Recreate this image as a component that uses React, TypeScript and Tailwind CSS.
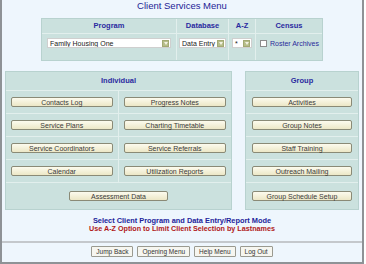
import type { ReactNode } from "react";

const font = { fontFamily: '"Liberation Sans", Arial, sans-serif' };

function Btn({ children, className = "" }: { children: ReactNode; className?: string }) {
  return (
    <div
      className={`h-[10px] flex items-center justify-center rounded-[2px] border border-[#8a8a76] bg-gradient-to-b from-[#fcfbee] to-[#ece7c6] text-[7px] leading-none text-[#3a3a3a] ${className}`}
    >
      {children}
    </div>
  );
}

function Select({ label, className = "" }: { label: string; className?: string }) {
  return (
    <div className={`h-[10px] flex items-center bg-white border border-[#cfcfcf] ${className}`}>
      <span className="flex-1 pl-[2px] text-[7px] leading-none text-[#222] whitespace-nowrap overflow-hidden">{label}</span>
      <span className="w-[7px] h-[7px] mr-[1px] flex items-center justify-center bg-[#b6bd8a] border border-[#a3aa74]">
        <svg width="4" height="3" viewBox="0 0 4 3">
          <path d="M0 0 L4 0 L2 3 Z" fill="#f2f2e2" />
        </svg>
      </span>
    </div>
  );
}

const individual = [
  ["Contacts Log", "Progress Notes"],
  ["Service Plans", "Charting Timetable"],
  ["Service Coordinators", "Service Referrals"],
  ["Calendar", "Utilization Reports"],
];

const group = ["Activities", "Group Notes", "Staff Training", "Outreach Mailing", "Group Schedule Setup"];

export default function App() {
  return (
    <div
      style={font}
      className="w-[364px] h-[264px] bg-[#eef6fd] border-l-2 border-r-2 border-b-2 border-[#8e9296] flex flex-col"
    >
      <div className="h-[18px] text-center text-[9.5px] leading-[12px] text-[#1d1d95]">Client Services Menu</div>

      <div className="ml-[39px] w-[282px] h-[43px] bg-[#cbe1de] border border-[#b8d2cf] grid grid-cols-[135px_52px_27px_66px] grid-rows-[15px_26px] text-[7.5px]">
        <div className="flex items-center justify-center font-bold text-[#2a2aa0] border-b border-r border-[#e2efed]">Program</div>
        <div className="flex items-center justify-center font-bold text-[#2a2aa0] border-b border-r border-[#e2efed]">Database</div>
        <div className="flex items-center justify-center font-bold text-[#2a2aa0] border-b border-r border-[#e2efed]">A-Z</div>
        <div className="flex items-center justify-center font-bold text-[#2a2aa0] border-b border-[#e2efed]">Census</div>
        <div className="flex items-start pt-[4px] px-[5px] border-r border-[#e2efed]">
          <Select label="Family Housing One" className="w-full" />
        </div>
        <div className="flex items-start pt-[4px] px-[2px] border-r border-[#e2efed]">
          <Select label="Data Entry" className="w-full" />
        </div>
        <div className="flex items-start pt-[4px] px-[3px] border-r border-[#e2efed]">
          <Select label="*" className="w-full" />
        </div>
        <div className="flex items-start pt-[6px] pl-[4px] gap-[3px]">
          <span className="w-[7px] h-[7px] bg-white border border-[#8c8c8c]" />
          <span className="text-[7px] leading-[7px] text-[#2a2a9a] whitespace-nowrap">Roster Archives</span>
        </div>
      </div>

      <div className="mt-[10px] ml-[3px] flex gap-[13px]">
        <div className="w-[227px] h-[139px] bg-[#cbe1de] border border-[#b8d2cf] flex flex-col">
          <div className="h-[19px] flex items-center justify-center font-bold text-[7.5px] text-[#2a2aa0] border-b border-[#e2efed]">
            Individual
          </div>
          {individual.map(([a, b]) => (
            <div key={a} className="h-[23px] grid grid-cols-2 border-b border-[#e2efed]">
              <div className="flex items-center px-[5px] border-r border-[#e2efed]">
                <Btn className="w-full">{a}</Btn>
              </div>
              <div className="flex items-center px-[5px]">
                <Btn className="w-full">{b}</Btn>
              </div>
            </div>
          ))}
          <div className="flex-1 flex items-start pt-[8px] justify-center">
            <Btn className="w-[99px]">Assessment Data</Btn>
          </div>
        </div>

        <div className="w-[114px] h-[139px] bg-[#cbe1de] border border-[#b8d2cf] flex flex-col">
          <div className="h-[19px] flex items-center justify-center font-bold text-[7.5px] text-[#2a2aa0] border-b border-[#e2efed]">
            Group
          </div>
          {group.map((g, i) => (
            <div
              key={g}
              className={`${i < group.length - 1 ? "h-[23px] items-center border-b border-[#e2efed]" : "flex-1 items-start pt-[8px]"} flex px-[6px]`}
            >
              <Btn className="w-full">{g}</Btn>
            </div>
          ))}
        </div>
      </div>

      <div className="mt-[7px] text-center font-bold text-[7.4px] leading-[8px] text-[#23239a]">
        Select Client Program and Data Entry/Report Mode
      </div>
      <div className="text-center font-bold text-[7.2px] leading-[8px] text-[#b01818]">
        Use A-Z Option to Limit Client Selection by Lastnames
      </div>

      <div className="mt-[8px] h-[2px] bg-[#c4c8cc]" />

      <div className="mt-[3px] flex justify-center gap-[4px] text-[6.5px] text-[#333]">
        {["Jump Back", "Opening Menu", "Help Menu", "Log Out"].map((t) => (
          <div key={t} className="h-[11px] px-[4px] flex items-center bg-[#f6f6f0] border border-[#9a9a90] rounded-[1px]">
            {t}
          </div>
        ))}
      </div>
    </div>
  );
}
